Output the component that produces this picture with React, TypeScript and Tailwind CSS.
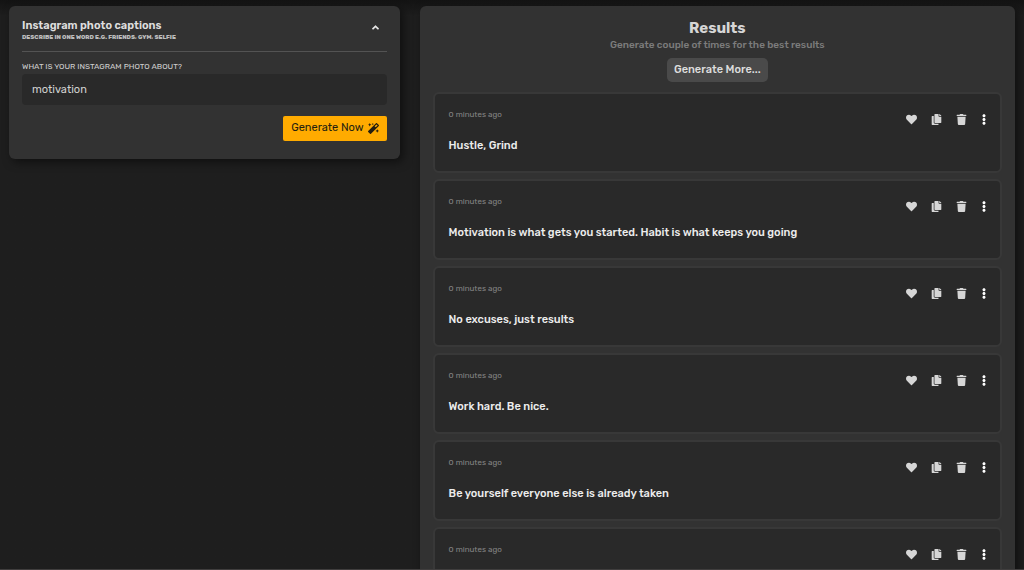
import { useState } from "react";
import { FaAngleUp, FaCopy, FaEllipsisV, FaHeart, FaMagic, FaTrash } from "react-icons/fa";

const captions = [
  "Hustle, Grind",
  "Motivation is what gets you started. Habit is what keeps you going",
  "No excuses, just results",
  "Work hard. Be nice.",
  "Be yourself everyone else is already taken",
  "Dream big, work harder",
];

function ResultCard({ text }: { text: string }) {
  return (
    <li className="flex min-h-[81px] items-start justify-between rounded-md border-2 border-[#383838] bg-[#292929] py-4 pr-3 pl-[14px]">
      <div>
        <p className="text-[8px] leading-[10px] text-[#858585]">0 minutes ago</p>
        <p className="mt-[18px] text-[11px] leading-[16px] font-medium text-[#ececec]">{text}</p>
      </div>
      <div className="mt-1 flex items-center gap-[13px] text-[#d6d6d6]">
        <button type="button" aria-label="Like" className="flex w-3 justify-center"><FaHeart size={11} /></button>
        <button type="button" aria-label="Copy" className="flex w-3 justify-center"><FaCopy size={11} /></button>
        <button type="button" aria-label="Delete" className="flex w-3 justify-center"><FaTrash size={11} /></button>
        <button type="button" aria-label="More" className="flex w-2 justify-center text-white"><FaEllipsisV size={11} /></button>
      </div>
    </li>
  );
}

export default function App() {
  const [topic, setTopic] = useState("motivation");
  return (
    <div className="h-screen overflow-hidden border-b border-[#403e3e] bg-[#1e1e1e] bg-linear-to-b from-[#131313] to-[#1e1e1e] to-[16px] font-['Rubik','Roboto',sans-serif]">
      <main className="grid grid-cols-[2fr_3fr] items-start pt-[6px]">
        <div className="pr-[10px] pl-[9px]">
          <section className="rounded-md bg-[#323232] px-[13px] pt-[13px] pb-[18px] shadow-[3px_3px_10px_rgba(0,0,0,0.5)]">
            <header className="flex items-start justify-between border-b border-[#535353] pb-[10px]">
              <div>
                <h1 className="text-[11px] leading-[14px] font-semibold text-[#dedede]">Instagram photo captions</h1>
                <p className="text-[6px] leading-[8px] font-extrabold text-[#bcbcbc] uppercase">Describe in one word e.g. friends, gym, selfie</p>
              </div>
              <button type="button" aria-label="Collapse" className="mt-[3px] mr-[6px] text-[#e6e6e6]"><FaAngleUp size={11} /></button>
            </header>
            <form onSubmit={(e) => e.preventDefault()}>
              <label htmlFor="topic" className="mt-[10px] block text-[8px] leading-[10px] text-[#d0d0d0] uppercase">What is your Instagram photo about?</label>
              <input id="topic" value={topic} onChange={(e) => setTopic(e.target.value)} className="mt-[2px] block h-[31px] w-full rounded-sm bg-[#292929] px-[10px] text-[11px] text-[#d0d0d0] outline-none" />
              <div className="mt-[11px] flex justify-end">
                <button type="submit" className="flex h-[25px] items-center gap-1 rounded-[2px] bg-[#ffab00] px-2 text-[11px] text-[#241e10]">
                  Generate Now
                  <FaMagic size={11} />
                </button>
              </div>
            </form>
          </section>
        </div>

        <div className="pr-[9px] pl-[10px]">
          <section className="rounded-md bg-[#323232] px-[13px] pt-[13px] shadow-[3px_3px_10px_rgba(0,0,0,0.5)]">
            <header className="flex flex-col items-center">
              <h2 className="text-[15px] leading-[18px] font-bold text-[#d6d6d6]">Results</h2>
              <p className="text-[10px] leading-[16px] font-medium text-[#7c7c7c]">Generate couple of times for the best results</p>
              <button type="button" className="mt-[5px] h-6 rounded-[5px] bg-[#4a4a4a] px-[7px] text-[11px] font-medium text-[#dcdcdc]">Generate More...</button>
            </header>
            <ul className="mt-[10px] flex flex-col gap-[6px]">
              {captions.map((text) => <ResultCard key={text} text={text} />)}
            </ul>
          </section>
        </div>
      </main>
    </div>
  );
}
